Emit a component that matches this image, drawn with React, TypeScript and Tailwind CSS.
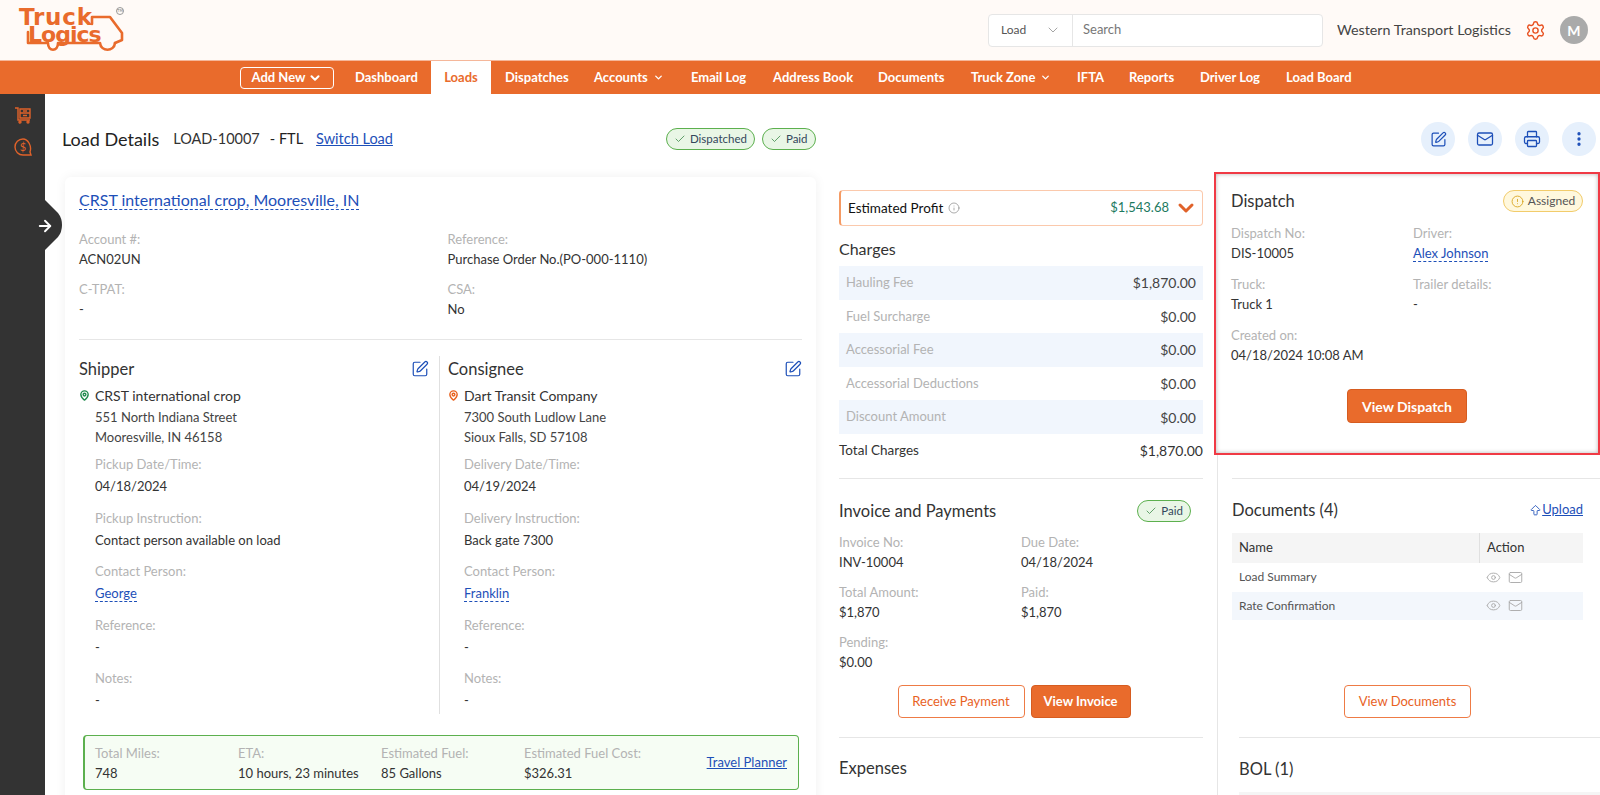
import { ArrowBigUp, ArrowRight, Check, ChevronDown, CircleAlert, EllipsisVertical, Eye, Info, Mail, MapPin, Printer, Settings, SquarePen } from 'lucide-react';
import type { ReactNode } from 'react';

const navItems = [
  { label: 'Dashboard', w: 'w-[76px]' },
  { label: 'Loads', w: 'w-[60px]', active: true },
  { label: 'Dispatches', w: 'w-[103px]' },
  { label: 'Accounts', w: 'w-[97px]', caret: true },
  { label: 'Email Log', w: 'w-[82px]' },
  { label: 'Address Book', w: 'w-[105px]' },
  { label: 'Documents', w: 'w-[93px]' },
  { label: 'Truck Zone', w: 'w-[106px]', caret: true },
  { label: 'IFTA', w: 'w-[52px]' },
  { label: 'Reports', w: 'w-[71px]' },
  { label: 'Driver Log', w: 'w-[86px]' },
  { label: 'Load Board', w: 'w-[70px]' },
];

const charges = [
  ['Hauling Fee', '$1,870.00'],
  ['Fuel Surcharge', '$0.00'],
  ['Accessorial Fee', '$0.00'],
  ['Accessorial Deductions', '$0.00'],
  ['Discount Amount', '$0.00'],
];

function Field({ label, children, className = '' }: { label: string; children: ReactNode; className?: string }) {
  return (
    <div className={className}>
      <div className="text-[13px] leading-[20px] text-[#b3b3b3]">{label}</div>
      <div className="text-[13px] leading-[20px] text-[#333]">{children}</div>
    </div>
  );
}

function TallField({ label, children }: { label: string; children: ReactNode }) {
  return (
    <div className="h-[53.5px]">
      <div className="text-[13px] leading-[20px] text-[#b3b3b3]">{label}</div>
      <div className="mt-[2px] text-[13px] leading-[20px] text-[#333]">{children}</div>
    </div>
  );
}

function DashLink({ children }: { children: ReactNode }) {
  return <span className="border-b border-dashed border-[#1d4fb8] text-[#1d4fb8]">{children}</span>;
}

function Badge({ label }: { label: string }) {
  return (
    <span className="flex h-[22px] items-center gap-[4px] rounded-full border border-[#5cb04e] bg-[#e9f6e6] px-[7px] text-[11.5px] text-[#33475b]">
      <Check size={12} strokeWidth={1.6} className="text-[#3d8a4a]" />
      {label}
    </span>
  );
}

function RoundBtn({ children }: { children: ReactNode }) {
  return <div className="flex h-[34px] w-[34px] items-center justify-center rounded-full bg-[#e6f0fc] text-[#1d4fb8]">{children}</div>;
}

function Logo() {
  return (
    <div className="relative h-[50px] w-[112px] font-['DejaVu_Sans',sans-serif] text-[#e96b2c]">
      <svg className="absolute left-0 top-0" width="112" height="50" viewBox="0 0 112 50" fill="none" stroke="currentColor" strokeWidth="2.6" strokeLinejoin="round" strokeLinecap="round">
        <path d="M73 19V12H91L103 28V35L96 38" />
        <path d="M9 27V38H29c0 9 10 9 10 0H81c1 9 14 9 15 0" />
      </svg>
      <div className="absolute left-0 top-[4px] whitespace-nowrap text-[22px] font-bold leading-[17px]">
        <span className="text-[23px] tracking-[0.8px]">Truck</span>
        <br />
        <span className="ml-[9px] tracking-[-1px]">Logics</span>
      </div>
      <span className="absolute left-[97px] top-[2px] flex h-[8px] w-[8px] items-center justify-center rounded-full border border-[#999] text-[4px] leading-none text-[#888]">TM</span>
    </div>
  );
}

function ShelfIcon() {
  return (
    <svg width="16" height="17" viewBox="0 0 16 17" fill="none" stroke="#e0622a" strokeWidth="1.4">
      <path d="M0 1h3v12h12" />
      <path d="M5 2h10v4H5zM5 6h10v5H5z" />
      <path d="M8 4h4M8 8.5h4" />
      <circle cx="5" cy="15" r="1" />
      <circle cx="13" cy="15" r="1" />
    </svg>
  );
}

function MoneyIcon() {
  return (
    <svg width="18" height="18" viewBox="0 0 18 18" fill="none" stroke="#e0622a" strokeWidth="1.4">
      <path d="M9 1a8 8 0 1 0 0 16h8l-1-3c2-6-2-13-7-13z" />
      <text x="9" y="13" textAnchor="middle" fontSize="11" fill="#e0622a" stroke="none" fontFamily="Lato">$</text>
    </svg>
  );
}

export default function App() {
  return (
    <div className="h-[795px] w-[1600px] overflow-hidden bg-white font-['Lato',sans-serif] text-[#333]">
      <header className="flex h-[60px] items-center bg-[#fffaf7] pl-[19px]">
        <Logo />
        <div className="ml-[857px] flex h-[33px] w-[335px] rounded border border-[#e6e6e6] bg-white text-[12px]">
          <div className="flex w-[84px] items-center justify-between border-r border-[#e6e6e6] pl-[12px] pr-[11px] text-[#555]">
            Load
            <ChevronDown size={16} strokeWidth={1} className="text-[#777]" />
          </div>
          <div className="flex items-center pl-[10px] text-[13px] text-[#777]">Search</div>
        </div>
        <span className="ml-[14px] text-[14.3px] text-[#444]">Western Transport Logistics</span>
        <Settings size={21} strokeWidth={1.6} className="ml-[14px] text-[#e8501f]" />
        <div className="ml-[14px] flex h-[28px] w-[28px] items-center justify-center rounded-full bg-[#aaa] text-[14px] font-bold text-white">M</div>
      </header>

      <nav className="flex h-[34px] items-center border-t border-[#f5b79a] bg-[#e96b2c] pl-[240px] text-[13px] font-bold text-white">
        <div className="mr-[21px] flex h-[22px] w-[94px] items-center justify-center gap-[3px] rounded border border-[#fff]">
          Add New
          <ChevronDown size={14} strokeWidth={3.5} />
        </div>
        {navItems.map((item) => (
          <div
            key={item.label}
            className={item.active ? `flex h-full ${item.w} items-center justify-center bg-white text-[#e96b2c]` : `flex h-full ${item.w} items-center ${item.label === 'Dispatches' ? 'pl-[14px]' : ''}`}
          >
            {item.label}
            {item.caret && <ChevronDown size={11} strokeWidth={3} className="ml-[5px]" />}
          </div>
        ))}
      </nav>

      <div className="flex h-[701px]">
        <aside className="relative w-[45px] shrink-0 bg-[#333]">
          <div className="flex flex-col items-center gap-[14px] pl-[1px] pt-[13px]">
            <ShelfIcon />
            <MoneyIcon />
          </div>
          <svg className="absolute left-[45px] top-[106px]" width="17" height="50" viewBox="0 0 17 50" fill="#333">
            <path d="M0 0L13 13Q17 18 17 25Q17 32 13 37L0 50Z" />
          </svg>
          <ArrowRight size={18} strokeWidth={2.5} className="absolute left-[36px] top-[123px] text-white" />
        </aside>

        <main className="min-w-0 flex-1">
          <div className="flex h-[78px] items-center pl-[17px] pr-[4px] pt-[12px]">
            <span className="text-[18px] text-[#222]">Load Details</span>
            <span className="ml-[14px] text-[14.5px] text-[#333]">LOAD-10007</span>
            <span className="ml-[10px] text-[14.5px] text-[#222]">- FTL</span>
            <span className="ml-[13px] text-[14.5px] text-[#1d4fb8] underline">Switch Load</span>
            <div className="ml-[273px] flex gap-[7px]">
              <Badge label="Dispatched" />
              <Badge label="Paid" />
            </div>
            <div className="ml-auto flex gap-[13px]">
              <RoundBtn><SquarePen size={17} strokeWidth={1.7} /></RoundBtn>
              <RoundBtn><Mail size={18} strokeWidth={1.7} /></RoundBtn>
              <RoundBtn><Printer size={18} strokeWidth={1.7} /></RoundBtn>
              <RoundBtn><EllipsisVertical size={18} strokeWidth={2.4} /></RoundBtn>
            </div>
          </div>

          <div className="flex items-start">
            <section className="ml-[20px] mt-[5px] h-[640px] w-[751px] shrink-0 rounded-md bg-white px-[14px] pt-[11px] shadow-[0_0_12px_rgba(0,0,0,0.06)]">
              <div className="text-[16px] leading-[24px]"><DashLink>CRST international crop, Mooresville, IN</DashLink></div>
              <div className="mt-[17px] grid grid-cols-2 gap-y-[10px] border-b border-[#e6e6e6] pb-[20px]">
                <Field label="Account #:">ACN02UN</Field>
                <div className="pl-[7px]"><Field label="Reference:">Purchase Order No.(PO-000-1110)</Field></div>
                <Field label="C-TPAT:">-</Field>
                <div className="pl-[7px]"><Field label="CSA:">No</Field></div>
              </div>
              <div className="mt-[16px] flex h-[358px]">
                <div className="w-[361px] border-r border-[#e0e0e0] pr-[10px]">
                  <div className="flex h-[26px] items-center justify-between text-[16.5px]">
                    Shipper
                    <SquarePen size={18} strokeWidth={1.6} className="text-[#1d4fb8]" />
                  </div>
                  <div className="mt-[3px] flex h-[20px] items-center gap-[5px] text-[14px]">
                    <MapPin size={11} strokeWidth={3} className="text-[#1f8a4c]" />
                    CRST international crop
                  </div>
                  <div className="pl-[16px] text-[13px] leading-[20px] text-[#444]">
                    <div className="mt-[2px]">551 North Indiana Street</div>
                    <div>Mooresville, IN 46158</div>
                    <div className="mt-[7px]">
                      <TallField label="Pickup Date/Time:">04/18/2024</TallField>
                      <TallField label="Pickup Instruction:">Contact person available on load</TallField>
                      <TallField label="Contact Person:"><DashLink>George</DashLink></TallField>
                      <TallField label="Reference:">-</TallField>
                      <TallField label="Notes:">-</TallField>
                    </div>
                  </div>
                </div>
                <div className="flex-1 pl-[8px]">
                  <div className="flex h-[26px] items-center justify-between text-[16.5px]">
                    Consignee
                    <SquarePen size={18} strokeWidth={1.6} className="text-[#1d4fb8]" />
                  </div>
                  <div className="mt-[3px] flex h-[20px] items-center gap-[5px] text-[14px]">
                    <MapPin size={11} strokeWidth={3} className="text-[#e8621f]" />
                    Dart Transit Company
                  </div>
                  <div className="pl-[16px] text-[13px] leading-[20px] text-[#444]">
                    <div className="mt-[2px]">7300 South Ludlow Lane</div>
                    <div>Sioux Falls, SD 57108</div>
                    <div className="mt-[7px]">
                      <TallField label="Delivery Date/Time:">04/19/2024</TallField>
                      <TallField label="Delivery Instruction:">Back gate 7300</TallField>
                      <TallField label="Contact Person:"><DashLink>Franklin</DashLink></TallField>
                      <TallField label="Reference:">-</TallField>
                      <TallField label="Notes:">-</TallField>
                    </div>
                  </div>
                </div>
              </div>
              <div className="ml-[4px] mr-[3px] mt-[21px] flex h-[55px] items-center rounded border border-l-2 border-[#5cb04e] bg-[#f6fdf4] pl-[10px] pr-[11px]">
                <Field label="Total Miles:" className="w-[143px]">748</Field>
                <Field label="ETA:" className="w-[143px]">10 hours, 23 minutes</Field>
                <Field label="Estimated Fuel:" className="w-[143px]">85 Gallons</Field>
                <Field label="Estimated Fuel Cost:" className="flex-1">$326.31</Field>
                <span className="text-[13px] text-[#1d4fb8] underline">Travel Planner</span>
              </div>
            </section>

            <section className="ml-[23px] w-[364px] shrink-0 pt-[18px]">
              <div className="flex h-[36px] items-center rounded border border-l-2 border-[#fbc9ac] border-l-[#f59a63] pl-[7px] pr-[4px]">
                <span className="text-[13.5px] text-[#111]">Estimated Profit</span>
                <Info size={12} strokeWidth={1.4} className="ml-[5px] text-[#888]" />
                <span className="ml-auto text-[13px] text-[#1d7a5f]">$1,543.68</span>
                <ChevronDown size={24} strokeWidth={3} className="ml-[5px] text-[#e0622a]" />
              </div>
              <div className="mt-[9px] flex h-[28px] items-center text-[16px]">Charges</div>
              <div className="mt-[3px]">
                {charges.map(([name, value], i) => (
                  <div key={name} className={`flex h-[33.6px] items-center justify-between px-[7px] ${i % 2 === 0 ? 'bg-[#f1f6fd]' : ''}`}>
                    <span className="text-[13px] text-[#b3b3b3]">{name}</span>
                    <span className="text-[14px] text-[#444]">{value}</span>
                  </div>
                ))}
              </div>
              <div className="flex h-[33px] items-center justify-between text-[13.5px] text-[#333]">
                <span>Total Charges</span>
                <span className="text-[14px]">$1,870.00</span>
              </div>
              <div className="mt-[11px] border-t border-[#e6e6e6] px-0 pt-[19px]">
                <div className="flex h-[26px] items-center justify-between pr-[12px] text-[16.5px]">
                  Invoice and Payments
                  <Badge label="Paid" />
                </div>
                <div className="mt-[8px] grid grid-cols-[182px_1fr] gap-y-[10px]">
                  <Field label="Invoice No:">INV-10004</Field>
                  <Field label="Due Date:">04/18/2024</Field>
                  <Field label="Total Amount:">$1,870</Field>
                  <Field label="Paid:">$1,870</Field>
                  <Field label="Pending:">$0.00</Field>
                </div>
                <div className="mt-[13px] flex justify-center gap-[6px] pr-[14px] text-[13px]">
                  <div className="flex h-[33px] w-[127px] items-center justify-center rounded border border-[#ee7b45] text-[#e8621f]">Receive Payment</div>
                  <div className="flex h-[33px] w-[100px] items-center justify-center rounded border border-[#d65c20] bg-[#e96b2c] font-bold text-white">View Invoice</div>
                </div>
              </div>
              <div className="mt-[19px] border-t border-[#e6e6e6] pt-[17px] text-[16.5px] leading-[26px]">Expenses</div>
            </section>

            <section className="ml-[11px] w-[386px] shrink-0 self-stretch">
              <div className="relative h-[283px] border-2 border-[#f03a45] bg-white pl-[15px] pr-[15px] pt-[15px] shadow-[inset_0_0_4px_rgba(0,0,0,0.3)]">
                <div className="flex h-[24px] items-center justify-between text-[16.5px]">
                  Dispatch
                  <span className="flex h-[22px] w-[80px] items-center justify-center gap-[4px] rounded-full border border-[#f2cc6b] bg-[#fff8dd] text-[12px] text-[#555]">
                    <CircleAlert size={13} strokeWidth={1.6} className="text-[#d8a21b]" />
                    Assigned
                  </span>
                </div>
                <div className="mt-[10px] grid grid-cols-[182px_1fr] gap-y-[11px]">
                  <Field label="Dispatch No:">DIS-10005</Field>
                  <Field label="Driver:"><DashLink>Alex Johnson</DashLink></Field>
                  <Field label="Truck:">Truck 1</Field>
                  <Field label="Trailer details:">-</Field>
                  <Field label="Created on:" className="col-span-2">04/18/2024 10:08 AM</Field>
                </div>
                <div className="mt-[24px] flex justify-center">
                  <div className="flex h-[34px] w-[120px] items-center justify-center rounded border border-[#d65c20] bg-[#e96b2c] text-[14px] font-bold text-white">View Dispatch</div>
                </div>
              </div>
              <div className="ml-[3px] h-[400px] border-l border-[#e6e6e6] pl-[14px] pt-[23px]">
                <div className="border-t border-[#e6e6e6] pt-[18px]">
                  <div className="flex h-[26px] w-[351px] items-center justify-between text-[16.5px]">
                    Documents (4)
                    <span className="flex items-center text-[13px] text-[#1d4fb8] underline"><ArrowBigUp size={13} strokeWidth={1.6} />Upload</span>
                  </div>
                  <div className="mt-[10px] w-[351px] text-[12px] text-[#555]">
                    <div className="flex h-[30px] items-center bg-[#f5f5f5] text-[13px] text-[#333]">
                      <span className="w-[247px] pl-[7px]">Name</span>
                      <span className="flex h-full items-center border-l border-[#e0e0e0] pl-[7px]">Action</span>
                    </div>
                    {['Load Summary', 'Rate Confirmation'].map((d, i) => (
                      <div key={d} className={`flex h-[28.5px] items-center ${i === 1 ? 'bg-[#f3f7fc]' : ''}`}>
                        <span className="w-[254px] pl-[7px]">{d}</span>
                        <Eye size={15} strokeWidth={1.5} className="text-[#aaa]" />
                        <Mail size={15} strokeWidth={1.5} className="ml-[7px] text-[#aaa]" />
                      </div>
                    ))}
                  </div>
                  <div className="mt-[65px] flex w-[351px] justify-center">
                    <div className="flex h-[33px] w-[127px] items-center justify-center rounded border border-[#ee7b45] text-[13px] text-[#e8621f]">View Documents</div>
                  </div>
                  <div className="ml-[7px] mt-[19px] border-t border-[#e6e6e6] pt-[18px]">
                    <div className="text-[16.5px] leading-[26px]">BOL (1)</div>
                    <div className="mt-[10px] h-[30px] bg-[#f5f5f5]" />
                  </div>
                </div>
              </div>
            </section>
          </div>
        </main>
      </div>
    </div>
  );
}
